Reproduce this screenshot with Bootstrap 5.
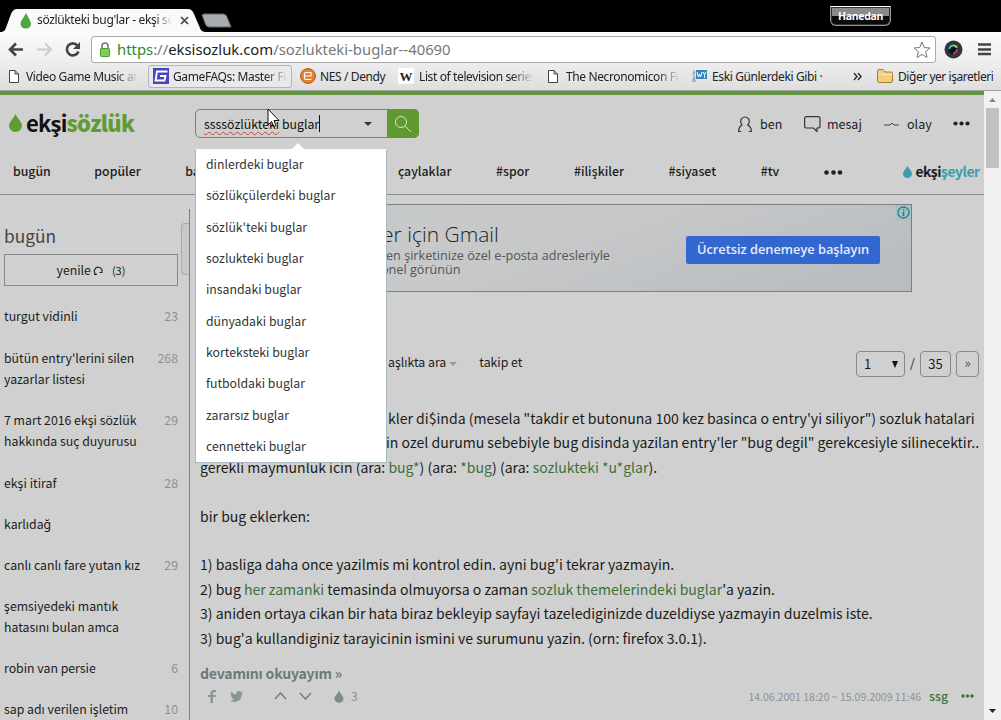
<!DOCTYPE html>
<html lang="tr">
<head>
<meta charset="utf-8">
<title>sözlükteki bug'lar - ekşi sözlük</title>
<link rel="stylesheet" href="https://cdn.jsdelivr.net/npm/bootstrap@5.3.0/dist/css/bootstrap.min.css">
<style>
html,body{height:720px;overflow:hidden}
body{font-family:"Noto Sans CJK JP","Noto Sans",sans-serif;font-size:12.3px;line-height:21.4px;color:#1a1c1c;background:#d0d0d0}
svg{display:block;flex:none}
.nw,.nav-row,.entry div{white-space:nowrap}
.ui-font{font-family:"Noto Sans","Open Sans",sans-serif}
/* browser chrome */
.tabstrip{height:32px;background:#000}
.tab-face{width:202px;height:24px;margin-top:8px}
.tab-title{left:37px;top:0;width:136px;line-height:24px;font-size:12px;letter-spacing:-.35px;color:#222;overflow:hidden;-webkit-mask:linear-gradient(90deg,#000 118px,transparent 135px)}
.user-tag{left:830px;top:6px;width:61px;height:20px;border:1px solid #999;border-top-color:#fff;border-radius:1px 1px 6px 6px;background:linear-gradient(#8a8a8a 48%,#0a0a0a 52%);color:#fff;font-size:10.5px;line-height:19px;letter-spacing:-.3px;box-shadow:inset 0 0 0 1px #333}
.toolbar{height:30px;background:linear-gradient(#fbfbfb,#eee);padding-top:4px}
.address{width:845px;height:27px;margin-left:10px;border:1px solid #a9a9a9;border-radius:3px;background:#fff;font-size:14.85px;line-height:25px;color:#777}
.bookmarks{height:28px;background:linear-gradient(#eee,#dedede);font-size:12px;line-height:27px;color:#222}
.bm{overflow:hidden;letter-spacing:-.38px;white-space:nowrap}
.fade-end{-webkit-mask:linear-gradient(90deg,#000 80%,transparent)}
.bm-hot{width:144px;height:23px;line-height:21px;border:1px solid #b5b5b5;border-radius:3px;background:#e9e9ec}
/* page */
.viewport{height:630px;border-top:1px solid #9da39a}
.sheet{width:984px;height:629px;overflow:hidden}
.greenbar{height:4px;background:#64943f}
.scroller{width:17px;background:#f1f1f1}
.thumb{width:13px;height:60px;background:#c1c1c1}
.head{height:57px}
.brand-name{font-size:22px;font-weight:700;letter-spacing:-.8px;line-height:27px;color:#111}
.brand-name b{color:#609c35}
.search-box{width:224px;height:29px;margin-left:60px;border:1px solid #619a3c;border-radius:5px;margin-top:14px}
.search-text{font-size:12.3px;line-height:26px;color:#111}
.search-text u{text-decoration:underline wavy #c64040 1px;text-underline-offset:2px}
.caretbar{width:1px;height:17px;background:#111}
.search-go{width:32px;height:29px;background:#60992f;margin:-1px;border-radius:0 5px 5px 0}
.menu{left:195px;top:58px;width:192px;height:314px;background:#fff;border:1px solid #a8b8bc;border-top-color:#fff;z-index:5;font-size:12.25px;color:#333}
.menu div{height:31.33px;line-height:28.6px;padding-left:10px}
.menu:before{content:"";position:absolute;left:94px;top:-7px;border:8px solid transparent;border-top:0;border-bottom-color:#fff}
.nav-row{height:40px;gap:44.6px;padding-left:13px;font-weight:500}
.top-line{border-bottom:1px solid #87918f;height:43px}
.side{width:190px;height:520px;border-right:1px solid #76807f;margin-top:14px;position:relative}
.side h2{font-size:17.3px;line-height:28px;margin:13px 0 4px 4px;font-weight:400;color:#444}
.refresh{width:174px;height:32px;margin-left:4px;border:1px solid #848a8a;line-height:30px}
.side-thumb{left:181px;top:14px;width:8px;height:52px;border:1px solid #aaa;border-right:0;border-radius:4px 0 0 4px;background:#c8c8c8}
.topics{padding:10.6px 11px 0 4px}
.topic{padding:9.85px 0}
.topic span{color:#8c9292}
.ad{width:712px;height:88px;margin:9px 0 0 10px;border:1px solid #7e7e82;background:linear-gradient(160deg,#c3c7ca,#c8c9c9 45%,#b9bdc2 90%);font-family:"Open Sans",sans-serif;position:relative}
.ad-title{font-size:21px;font-weight:300;line-height:25px;color:#222;margin-left:-5px}
.ad-sub{font-size:12.65px;line-height:14px;color:#555;margin-left:-1px}
.ad-btn{width:194px;height:28px;background:#3367d0;border-radius:2px;color:#e4ecfa;font-size:12.8px;font-weight:600;line-height:27px}
.pgbox{height:26px;border:1px solid #858b8b;border-radius:4px;line-height:24px;font-size:13px}
.entry{font-size:14.06px;line-height:24.4px;padding-left:10px}
.entry i{font-style:normal;color:#3c703b}
.hid{padding-left:188px}
.gray{color:#8a9394}
</style>
</head>
<body>
<div class="position-relative ui-font">
  <div class="tabstrip d-flex">
    <div class="tab-face position-relative">
      <svg width="236" height="24"><path d="M0 24 C5 24 5 22 7 17 L11 6 Q13 1 17 1 H188 Q192 1 194 6 L200 20 Q201 24 206 24Z" fill="#fafafa"/><path d="M204 6H223Q226 6 227 9L231 19H209Q206 19 205 15L202 7Z" fill="#a7acaf" stroke="#666"/><path d="M26 5C28 9 31 13 31 16A5.3 5.3 0 0 1 20.500 16C20.500 13 24 9 26 5Z" fill="#4da93c"/><path d="M181 9l7 7m0-7l-7 7" stroke="#444" stroke-width="1.700"/></svg>
      <div class="tab-title position-absolute nw">sözlükteki bug'lar - ekşi sözlük</div>
    </div>
  </div>
  <div class="user-tag position-absolute text-center fw-bold">Hanedan</div>
  <div class="toolbar d-flex">
    <svg width="81" height="27"><g fill="none" stroke="#444" stroke-width="2.600"><path d="M10 13.500H23M16 7.500L10 13.500L16 19.500"/><path d="M37 13.500H50M45 7.500L51 13.500L45 19.500" stroke="#ccc" stroke-width="2"/><path d="M77.500 9.500A6 6 0 1 0 78.500 15.500"/></g><path d="M80 6V13H73Z" fill="#444"/></svg>
    <div class="address d-flex align-items-center">
      <svg class="ms-2" width="10" height="16"><path d="M2 8V4A3 3 0 0 1 8 4V8" fill="none" stroke="#777" stroke-width="1.600"/><rect x=".5" y="6.500" width="9" height="8" rx="1" fill="#7fcf55" stroke="#4b9a30"/></svg>
      <div class="nw url" style="margin-left:7px"><span style="color:#2a8b2c">https</span>://<span style="color:#222">eksisozluk.com</span>/sozlukteki-buglar--40690</div>
      <svg class="ms-auto me-1" width="18" height="18"><path d="M9 1L11.200 6.500L17 7L12.600 10.700L14 16.500L9 13.400L4 16.500L5.400 10.700L1 7L6.800 6.500Z" fill="#fff" stroke="#777"/></svg>
    </div>
    <svg width="65" height="27"><circle cx="17.500" cy="13.500" r="9" fill="#30343b"/><circle cx="17.500" cy="13.500" r="5" fill="#111"/><path d="M13.500 13A4 4 0 0 1 17 9.500" stroke="#2ac9bc" stroke-width="2" fill="none"/><path d="M17 9.500A4 4 0 0 1 21 12" stroke="#b6c944" stroke-width="2" fill="none"/><path d="M21 13A4 4 0 0 1 17 17.500" stroke="#c4378b" stroke-width="2" fill="none"/><path d="M42 8.500h13M42 13.500h13M42 18h13" stroke="#444" stroke-width="2.600"/></svg>
  </div>
  <div class="bookmarks d-flex align-items-center">
    <svg style="margin-left:9px" width="10" height="13"><path d="M.5 .5H6L9.500 4V12.500H.5ZM6 .5V4H9.500" fill="#fff" stroke="#444"/></svg>
    <div class="bm fade-end" style="width:112px;margin-left:7px">Video Game Music at</div>
    <div class="bm-hot d-flex align-items-center" style="margin-left:10px"><svg style="margin-left:4px" width="16" height="16"><path d="M0 0H16V16H0Z" fill="#4a44bd"/><path d="M14.500 3.500H4L2.500 12.500H11.500L12.500 8H7" fill="none" stroke="#fff" stroke-width="1.800"/></svg><div class="bm fade-end" style="width:115px;margin-left:4px">GameFAQs: Master Fig</div></div>
    <svg style="margin-left:8px" width="16" height="16"><circle cx="8" cy="8" r="7.500" fill="#e3812e" stroke="#b45d18"/><path d="M11.500 4.500H6Q4.500 4.500 4.500 6V10Q4.500 11.500 6 11.500H11.500M5 8H11V5" fill="none" stroke="#fff" stroke-width="1.200"/></svg>
    <div class="bm" style="width:72px;margin-left:4px">NES / Dendy</div>
    <svg style="margin-left:6px" width="16" height="16"><rect width="16" height="16" rx="2" fill="#fff"/><text x="1.500" y="12.500" font-family="Liberation Serif" font-weight="700" font-size="13" fill="#222">W</text></svg>
    <div class="bm fade-end" style="width:115px;margin-left:5px">List of television series</div>
    <svg style="margin-left:14px" width="10" height="13"><path d="M.5 .5H6L9.500 4V12.500H.5ZM6 .5V4H9.500" fill="#fff" stroke="#444"/></svg>
    <div class="bm fade-end" style="width:114px;margin-left:8px">The Necronomicon Full</div>
    <svg style="margin-left:11px" width="16" height="16"><path d="M3 2V14M1 6L4.500 4M1 14L3 9L4.500 14" stroke="#99a" fill="none"/><path d="M5 2H16V11H5Z" fill="#3287bd"/><path d="M6 4L7.500 9L8.500 6L9.500 9L11 4M12 4L13.500 6.500L15 4M13.500 6.500V10" stroke="#fff" fill="none"/></svg>
    <div class="bm" style="width:112px;margin-left:5px">Eski Günlerdeki Gibi ·</div>
    <svg style="margin-left:29px" width="10" height="9"><path d="M1 1L4 4.500L1 8M5 1L8 4.500L5 8" fill="none" stroke="#333" stroke-width="1.500"/></svg>
    <svg style="margin-left:14px" width="16" height="14"><path d="M.5 2Q.5 .5 2 .5H6L8 3H14Q15.500 3 15.500 4.500V12Q15.500 13.500 14 13.500H2Q.5 13.500 .5 12Z" fill="#f3cd79" stroke="#a87f35"/><path d="M1 5.500H15" stroke="#fbe7b5"/></svg>
    <div class="bm" style="margin-left:5px;letter-spacing:-.45px">Diğer yer işaretleri</div>
  </div>
</div>

<div class="viewport d-flex">
 <div class="sheet position-relative">
  <div class="greenbar"></div>
  <div class="head d-flex">
    <div class="d-flex" style="width:135px;padding:14px 0 0 9px">
      <svg width="13" height="20" class="mt-1"><path d="M6.500 1C8 5 13 9 13 13A6.400 6 0 0 1 0 13C0 9 5 5 6.500 1Z" fill="#609c35"/></svg>
      <div class="brand-name nw" style="margin-left:4px">ekşi<b>sözlük</b></div>
    </div>
    <div class="search-box d-flex align-items-center">
      <div class="search-text nw" style="margin-left:8px"><u>ssssözlükteki</u> buglar</div><div class="caretbar"></div>
      <svg class="ms-auto" style="margin-right:16px" width="8" height="4"><path d="M0 0H8L4 4Z" fill="#333"/></svg>
      <div class="search-go d-flex align-items-center justify-content-center"><svg width="18" height="18"><circle cx="7" cy="7" r="5.500" fill="none" stroke="#d5e5c9"/><path d="M11 11L17 17" stroke="#d5e5c9"/></svg></div>
    </div>
    <div class="d-flex align-items-center ms-auto nw" style="height:29px;margin-top:14px;padding-right:14px;font-size:12.5px">
      <svg width="14" height="16"><path d="M4.300 9A4.300 4.500 0 1 1 9.700 9Q13.300 10.500 13.300 15.500H10.800M4.300 9Q.7 10.500 .7 15.500H3.200" fill="none" stroke="#333" stroke-width="1.200"/></svg><span style="margin-left:8px;width:44px">ben</span>
      <svg width="17" height="16"><path d="M2.500 .6H14Q16 .6 16 2.500V10Q16 12 14 12H13V15.500L9.500 12H2.500Q.6 12 .6 10V2.500Q.6 .6 2.500 .6Z" fill="none" stroke="#333" stroke-width="1.200"/></svg><span style="margin-left:6px;width:57px">mesaj</span>
      <svg width="15" height="6"><path d="M0 4H6L8 2L10 4H15" fill="none" stroke="#444"/></svg><span style="margin-left:8px;width:46px">olay</span>
      <svg width="17" height="5"><g fill="#222"><circle cx="2.500" cy="2.500" r="2.100"/><circle cx="8.500" cy="2.500" r="2.100"/><circle cx="14.500" cy="2.500" r="2.100"/></g></svg>
    </div>
  </div>
  <div class="top-line"><div class="nav-row d-flex align-items-center">
    <span style="margin-right:-1px">bugün</span><span>popüler</span><span class="flex-shrink-0" style="width:168px">ba</span><span>çaylaklar</span><span>#spor</span><span>#ilişkiler</span><span>#siyaset</span><span>#tv</span>
    <svg width="19" height="5"><g fill="#222"><circle cx="2.500" cy="2.500" r="2.300"/><circle cx="9.500" cy="2.500" r="2.300"/><circle cx="16" cy="2.500" r="2.300"/></g></svg>
    <div class="d-flex align-items-center" style="margin-left:16px"><svg width="9" height="12"><path d="M4.500 0C6 3 9 5 9 8A4.500 4 0 0 1 0 8C0 5 3 3 4.500 0Z" fill="#3d9cad"/></svg><b style="margin-left:3px;font-size:13.800px;letter-spacing:-.45px">ekşi<span style="color:#3d9cad">şeyler</span></b></div>
  </div></div>
  <div class="menu position-absolute">
    <div>dinlerdeki buglar</div><div>sözlükçülerdeki buglar</div><div>sözlük'teki buglar</div><div>sozlukteki buglar</div><div>insandaki buglar</div><div>dünyadaki buglar</div><div>korteksteki buglar</div><div>futboldaki buglar</div><div>zararsız buglar</div><div>cennetteki buglar</div>
  </div>
  <div class="d-flex">
    <div class="side flex-shrink-0">
      <h2>bugün</h2>
      <div class="refresh d-flex justify-content-center align-items-center"><span>yenile</span><svg style="margin:2px 9px 0 2px" width="10" height="10"><path d="M3.500 8.500A3.800 3.800 0 1 1 8.700 6.500M6.500 6.500H9.500M1 8.500H4" fill="none" stroke="#222" stroke-width="1.100"/></svg><span style="font-size:11px">(3)</span></div>
      <div class="side-thumb position-absolute"></div>
      <div class="topics">
        <div class="topic d-flex justify-content-between"><div>turgut vidinli</div><span>23</span></div>
        <div class="topic d-flex justify-content-between"><div>bütün entry'lerini silen<br>yazarlar listesi</div><span>268</span></div>
        <div class="topic d-flex justify-content-between"><div>7 mart 2016 ekşi sözlük<br>hakkında suç duyurusu</div><span>29</span></div>
        <div class="topic d-flex justify-content-between"><div>ekşi itiraf</div><span>28</span></div>
        <div class="topic"><div>karlıdağ</div></div>
        <div class="topic d-flex justify-content-between"><div>canlı canlı fare yutan kız</div><span>29</span></div>
        <div class="topic"><div>şemsiyedeki mantık<br>hatasını bulan amca</div></div>
        <div class="topic d-flex justify-content-between"><div>robin van persie</div><span>6</span></div>
        <div class="topic d-flex justify-content-between"><div class="nw">sap adı verilen işletim</div><span>10</span></div>
      </div>
    </div>
    <div class="flex-grow-1">
      <div class="ad d-flex">
        <div class="nw" style="padding:17px 0 0 186px;width:485px"><div class="ad-title">er için Gmail</div><div class="ad-sub" style="margin-top:1px">en şirketinize özel e-posta adresleriyle</div><div class="ad-sub" style="margin-left:-6px">onel görünün</div></div>
        <div class="ad-btn text-center nw" style="margin-top:31px">Ücretsiz denemeye başlayın</div>
        <svg class="position-absolute top-0 end-0" width="15" height="15"><path d="M0 0H15V15H0Z" fill="#a9bfc2"/><circle cx="7.500" cy="7.500" r="5.500" fill="none" stroke="#198392" stroke-width="1.300"/><path d="M7.500 6.500V11M7.500 4V5.300" stroke="#198392" stroke-width="1.600"/></svg>
      </div>
      <div class="d-flex align-items-center nw" style="height:26px;margin:59px 5px 0 198px">
        <span style="margin-top:-3px">aşlıkta ara</span><svg style="margin-left:3px" width="8" height="4"><path d="M0 0H8L4 4Z" fill="#999"/></svg><span style="margin:-3px 0 0 22px">takip et</span>
        <div class="pgbox ms-auto d-flex align-items-center justify-content-between" style="width:49px;padding:0 6px 0 7px"><span>1</span><svg width="6" height="7"><path d="M0 0H6L3 7Z" fill="#111"/></svg></div>
        <span style="width:15px" class="text-center">/</span><div class="pgbox text-center" style="width:31px">35</div><div class="pgbox text-center" style="width:23px;margin-left:5px;font-size:13px;line-height:22px;color:#555">»</div>
      </div>
      <div class="entry" style="margin-top:29px">
        <div class="hid">kler di$inda (mesela "takdir et butonuna 100 kez basinca o entry'yi siliyor") sozluk hatalari</div>
        <div class="hid" style="margin-left:-2px">in ozel durumu sebebiyle bug disinda yazilan entry'ler "bug degil" gerekcesiyle silinecektir..</div>
        <div>gerekli maymunluk icin (ara: <i>bug*</i>) (ara: <i>*bug</i>) (ara: <i>sozlukteki *u*glar</i>).</div><div>&nbsp;</div>
        <div>bir bug eklerken:</div><div>&nbsp;</div>
        <div>1) basliga daha once yazilmis mi kontrol edin. ayni bug'i tekrar yazmayin.</div>
        <div>2) bug <i>her zamanki</i> temasinda olmuyorsa o zaman <i>sozluk themelerindeki buglar</i>'a yazin.</div>
        <div>3) aniden ortaya cikan bir hata biraz bekleyip sayfayi tazelediginizde duzeldiyse yazmayin duzelmis iste.</div>
        <div>3) bug'a kullandiginiz tarayicinin ismini ve surumunu yazin. (orn: firefox 3.0.1).</div>
        <div style="margin-top:11px;color:#6d797a;font-weight:700;letter-spacing:-.2px">devamını okuyayım »</div>
      </div>
      <div class="d-flex align-items-center gray nw" style="height:22px;padding:0 10px 0 18px">
        <svg width="8" height="13"><path d="M2.500 13V7H0V5H2.500V3.500Q2.500 0 6 0H8V2.200H6.500Q5 2.200 5 3.500V5H8L7.600 7H5V13Z" fill="#8a9596"/></svg>
        <svg style="margin-left:14px" width="13" height="11"><path d="M0 9.500Q2.500 9.700 4 8.500Q2 8.200 1.500 6.500H2.700Q.6 5.500 .6 3.500L1.800 3.900Q.1 2.300 1 .5Q3.300 3.200 6.300 3.300Q6 .2 8.900 0Q10.200 0 11 .9L12.700 .2L11.700 1.800L13 1.500L11.800 2.900Q11.800 8 8 10Q4 12 0 9.500Z" fill="#8a9596"/></svg>
        <svg style="margin-left:31px" width="13" height="8"><path d="M1 7L6.500 1L12 7" fill="none" stroke="#737e80" stroke-width="1.500"/></svg>
        <svg style="margin-left:12px" width="13" height="8"><path d="M1 1L6.500 7L12 1" fill="none" stroke="#737e80" stroke-width="1.500"/></svg>
        <svg style="margin-left:22px" width="10" height="13"><path d="M5 0C6 4 9.500 6 9.500 8.500A4.500 4.300 0 0 1 .5 8.500C.5 6 4 4 5 0Z" fill="#7e898c"/></svg>
        <span style="margin-left:7px">3</span>
        <span class="ms-auto" style="font-size:10.5px">14.06.2001 18:20 ~ 15.09.2009 11:46</span><span style="margin-left:8px;color:#3c703b;font-weight:500">ssg</span>
        <svg style="margin-left:13px" width="13" height="4"><g fill="#3c703b"><circle cx="2" cy="2" r="1.700"/><circle cx="6.500" cy="2" r="1.700"/><circle cx="11" cy="2" r="1.700"/></g></svg>
      </div>
    </div>
  </div>
 </div>
 <div class="scroller d-flex flex-column align-items-center"><svg width="17" height="17"><path d="M5 11L8.500 7L12 11Z" fill="#888"/></svg><div class="thumb"></div><svg class="mt-auto" width="17" height="17"><path d="M5 6H12L8.500 10Z" fill="#222"/></svg></div>
</div>
<svg class="position-absolute" style="left:267px;top:108px;z-index:9" width="13" height="20"><path d="M1 1V17L4.500 13.500L7 18.500L9 17.500L7 12.500H12Z" fill="#fff" stroke="#111"/></svg>
<script src="https://cdn.jsdelivr.net/npm/bootstrap@5.3.0/dist/js/bootstrap.bundle.min.js"></script>
</body>
</html>
